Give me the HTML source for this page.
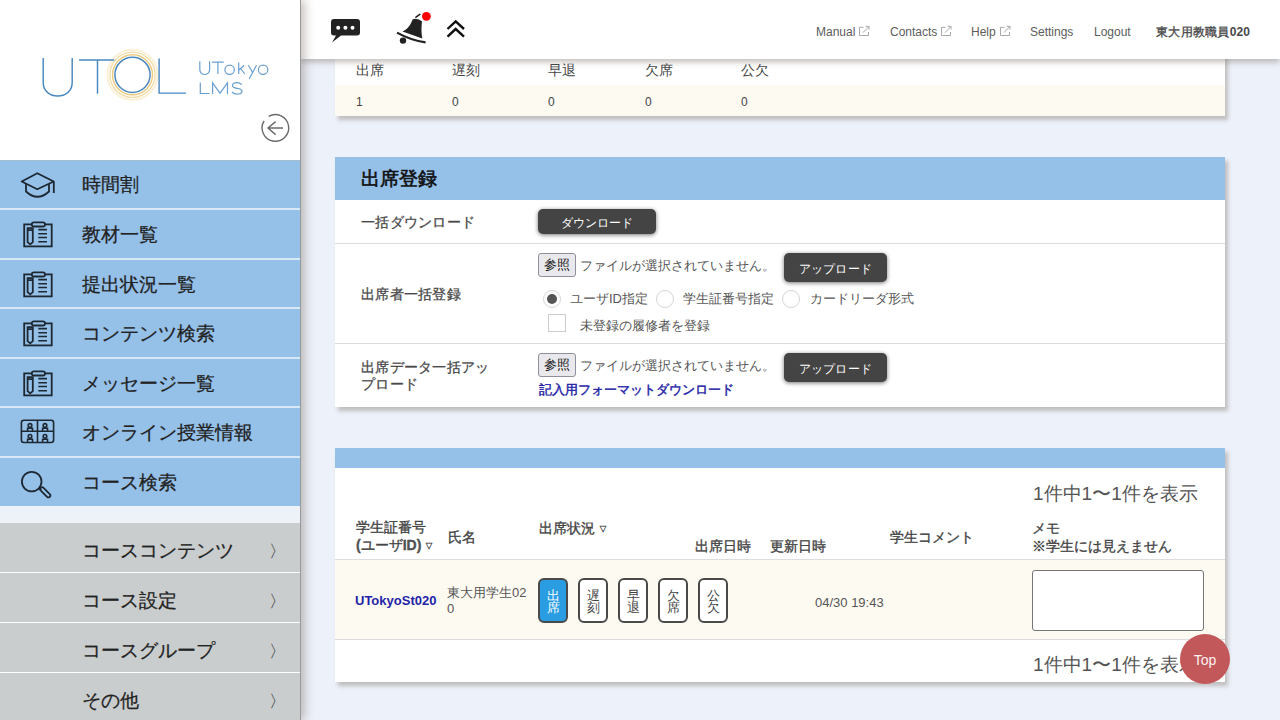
<!DOCTYPE html>
<html lang="ja"><head><meta charset="utf-8">
<style>
*{box-sizing:border-box;margin:0;padding:0}
html,body{width:1280px;height:720px;overflow:hidden}
body{position:relative;background:#edf1f9;font-family:"Liberation Sans",sans-serif;color:#444}
.abs{position:absolute}
#side{position:absolute;left:0;top:0;width:301px;height:720px;background:#fff;z-index:20;border-right:1px solid #999;box-shadow:3px 0 10px rgba(110,100,90,.45)}
.mi{position:absolute;left:0;width:300px;height:48px;background:#95c0e8;color:#222;font-size:19.2px;line-height:48px}
.mi span{position:absolute;left:82px;top:1px;-webkit-text-stroke:0.25px #222}
.mi svg{position:absolute;left:0;top:0}
.gi{position:absolute;left:0;width:300px;height:49px;background:#c9cdcd;color:#222;font-size:19.2px;line-height:49px}
.gi span{position:absolute;left:82px;top:3px;-webkit-text-stroke:0.25px #222}
.gi i{position:absolute;left:269px;top:4px;font-style:normal;font-size:17px;color:#333}
#hdr{position:absolute;left:301px;top:0;width:979px;height:59px;background:#fff;z-index:10;box-shadow:0 3px 6px rgba(110,100,90,.42)}
.card{position:absolute;left:335px;width:890px;background:#fff;box-shadow:3px 4px 4px rgba(110,100,90,.36)}
.lnk{position:absolute;top:24px;font-size:12px;line-height:16px;color:#5c5c5c}

.t{position:absolute;white-space:nowrap}
.hrow{position:absolute;left:0;width:890px;height:1px;background:#dcdcdc}
.dbtn{position:absolute;background:#444;border-radius:5px;color:#fff;font-size:13px;text-align:center;box-shadow:0 1px 4px rgba(0,0,0,.55)}
.fbtn{position:absolute;background:#e9e9ed;border:1px solid #8f8f9d;border-radius:3px;color:#111;font-size:13px;text-align:center}
.radio{position:absolute;width:18px;height:18px;border:1px solid #d6d6d6;border-radius:50%;background:#fff}
.sbtn{position:absolute;width:30px;height:45px;border:2px solid #4a4a4a;border-radius:6px;background:#fff;color:#444;font-size:13px;line-height:12px;padding-top:9.5px;text-align:center}
</style></head><body>
<div id="side">
  <svg class="abs" style="left:0;top:0" width="300" height="160" viewBox="0 0 300 160">
    <!-- logo -->
    <circle cx="132.5" cy="74.8" r="25" fill="none" stroke="#faf0d8" stroke-width="2"/>
    <circle cx="132.5" cy="74.8" r="22.6" fill="none" stroke="#f0dca6" stroke-width="1.3"/>
    <circle cx="132.5" cy="74.8" r="20" fill="none" stroke="#ecca7c" stroke-width="1.4"/>
    <circle cx="132.5" cy="74.8" r="17.6" fill="none" stroke="#4a88c0" stroke-width="1.5"/>
    <g fill="none" stroke="#4a88c0" stroke-width="1.45">
      <path d="M43.2 58 V82.5 C43.2 100.5 72.2 100.5 72.2 82.5 V58"/>
      <path d="M79 59.9 H114.3 M97.5 59.9 V93.8"/>
      <path d="M159.1 58.6 V93.1 H186"/>
    </g>
    
    <g fill="none" stroke="#6a9fcf" stroke-width="1.2" stroke-linecap="butt">
      <path d="M199.8 61.3 V69.6 A4.9 4.9 0 0 0 209.6 69.6 V61.3"/>
      <path d="M212.1 62.2 H223.7 M217.9 62.2 V74"/>
      <ellipse cx="229.6" cy="69.7" rx="4.7" ry="4.6"/>
      <path d="M238.7 62.6 V74 M244.3 65.2 L238.9 70 M240.6 68.5 L244.8 74"/>
      <path d="M248.3 65.2 L252.8 72.8 M256.5 65.2 L249.2 79"/>
      <ellipse cx="263.1" cy="69.7" rx="4.7" ry="4.6"/>
      <path d="M200.3 82.6 V93.5 H209.6"/>
      <path d="M212.6 94 V82.8 L220 93.2 L227.5 82.8 V94"/>
      <path d="M241.8 84.6 Q240 82.6 237 82.6 Q232.5 82.6 232.5 85.6 Q232.5 87.8 237 88.4 Q242 89 242 91.2 Q242 94.1 237 94.1 Q233.8 94.1 232 92"/>
    </g>
    
    <g fill="none" stroke="#6a6a6a" stroke-width="1.4">
      <path d="M268.75 116.38 A13.3 13.3 0 1 1 264.12 120.85"/>
      <path d="M283 128 H268 M275.6 121.6 L268 128 L275.6 134.6"/>
    </g>
  </svg>
  <div class="abs" style="left:0;top:160px;width:300px;height:345.5px;background:#d6e8f7"></div>
  <div class="abs" style="left:0;top:159.5px;width:300px;height:1.5px;background:#a6bccf;z-index:2"></div>
  <div class="mi" style="top:160px;height:48px;line-height:48px"><svg width="60" height="48" viewBox="0 0 60 48" style="position:absolute;left:0;top:0"><g fill="none" stroke="#1e2833" stroke-width="1.8" stroke-linejoin="round"><path d="M37.3 13.2 L53.7 21.5 L37.3 29.2 L21.7 21.5 Z"/><path d="M26 24 V31.5 Q37.5 42 49 31.5 V24"/><path d="M53.8 21.6 V33"/></g></svg><span>時間割</span></div>
  <div class="mi" style="top:210px;height:48px;line-height:48px"><svg width="60" height="48" viewBox="0 0 60 48" style="position:absolute;left:0;top:0"><g fill="none" stroke="#1e2833" stroke-width="1.8"><rect x="24.2" y="14.4" width="27.5" height="22" /><rect x="31.8" y="12.3" width="13.2" height="4.2" rx="2.1" fill="#95c0e8"/><path d="M27.6 18.2 H32.8 V32.2 L30.2 34.4 L27.6 32.2 Z M27.6 20.2 H32.8"/><path d="M38.3 19.6 H47 M38.3 23.8 H47 M38.3 27.5 H47 M38.3 31.7 H47" stroke-width="1.6"/></g></svg><span>教材一覧</span></div>
  <div class="mi" style="top:260px;height:47px;line-height:47px"><svg width="60" height="48" viewBox="0 0 60 48" style="position:absolute;left:0;top:0"><g fill="none" stroke="#1e2833" stroke-width="1.8"><rect x="24.2" y="14.4" width="27.5" height="22" /><rect x="31.8" y="12.3" width="13.2" height="4.2" rx="2.1" fill="#95c0e8"/><path d="M27.6 18.2 H32.8 V32.2 L30.2 34.4 L27.6 32.2 Z M27.6 20.2 H32.8"/><path d="M38.3 19.6 H47 M38.3 23.8 H47 M38.3 27.5 H47 M38.3 31.7 H47" stroke-width="1.6"/></g></svg><span>提出状況一覧</span></div>
  <div class="mi" style="top:309px;height:48px;line-height:48px"><svg width="60" height="48" viewBox="0 0 60 48" style="position:absolute;left:0;top:0"><g fill="none" stroke="#1e2833" stroke-width="1.8"><rect x="24.2" y="14.4" width="27.5" height="22" /><rect x="31.8" y="12.3" width="13.2" height="4.2" rx="2.1" fill="#95c0e8"/><path d="M27.6 18.2 H32.8 V32.2 L30.2 34.4 L27.6 32.2 Z M27.6 20.2 H32.8"/><path d="M38.3 19.6 H47 M38.3 23.8 H47 M38.3 27.5 H47 M38.3 31.7 H47" stroke-width="1.6"/></g></svg><span>コンテンツ検索</span></div>
  <div class="mi" style="top:359px;height:47px;line-height:47px"><svg width="60" height="48" viewBox="0 0 60 48" style="position:absolute;left:0;top:0"><g fill="none" stroke="#1e2833" stroke-width="1.8"><rect x="24.2" y="14.4" width="27.5" height="22" /><rect x="31.8" y="12.3" width="13.2" height="4.2" rx="2.1" fill="#95c0e8"/><path d="M27.6 18.2 H32.8 V32.2 L30.2 34.4 L27.6 32.2 Z M27.6 20.2 H32.8"/><path d="M38.3 19.6 H47 M38.3 23.8 H47 M38.3 27.5 H47 M38.3 31.7 H47" stroke-width="1.6"/></g></svg><span>メッセージ一覧</span></div>
  <div class="mi" style="top:408px;height:48px;line-height:48px"><svg width="60" height="48" viewBox="0 0 60 48" style="position:absolute;left:0;top:0"><g fill="none" stroke="#1e2833" stroke-width="1.6"><rect x="21.4" y="12.3" width="32.2" height="22.2" rx="2.5"/><path d="M37.5 12.3 V34.5 M21.4 23.2 H53.6"/><circle cx="30" cy="17.4" r="1.8"/><circle cx="45" cy="17.4" r="1.8"/><circle cx="30" cy="28.3" r="1.8"/><circle cx="45" cy="28.3" r="1.8"/><path d="M27.6 23 V20.3 H32.5 V23 M42.6 23 V20.3 H47.5 V23 M27.6 34 V31.2 H32.5 V34 M42.6 34 V31.2 H47.5 V34"/></g></svg><span>オンライン授業情報</span></div>
  <div class="mi" style="top:458px;height:47.5px;line-height:47.5px"><svg width="60" height="48" viewBox="0 0 60 48" style="position:absolute;left:0;top:0"><g fill="none" stroke="#1e2833" stroke-width="1.8"><circle cx="31.7" cy="23.6" r="9.8"/><path d="M42.2 31.2 L48.4 37.4" stroke-width="5.6" stroke-linecap="round"/><path d="M42.2 31.2 L48.4 37.4" stroke="#95c0e8" stroke-width="2.1" stroke-linecap="round"/><path d="M39.2 30.6 L41 32.3" /></g></svg><span>コース検索</span></div>
  <div class="abs" style="left:0;top:505.5px;width:300px;height:17.5px;background:#edf1f8"></div>
  <div class="gi" style="top:523px"><span>コースコンテンツ</span><i>〉</i></div>
  <div class="gi" style="top:573px"><span>コース設定</span><i>〉</i></div>
  <div class="gi" style="top:623px"><span>コースグループ</span><i>〉</i></div>
  <div class="gi" style="top:673px"><span>その他</span><i>〉</i></div>
</div>
<div id="hdr">
  <svg class="abs" style="left:0;top:0" width="200" height="59" viewBox="301 0 200 59">
    <g fill="#222">
      <path d="M334 19 H357 Q360 19 360 22 V32.6 Q360 35.6 357 35.6 H341 L332 42.5 L336 35.6 H334 Q331 35.6 331 32.6 V22 Q331 19 334 19 Z"/>
    </g>
    <g fill="#fff"><circle cx="338.2" cy="27.7" r="2"/><circle cx="345.4" cy="27.7" r="2"/><circle cx="352.5" cy="27.7" r="2"/></g>
    <g fill="#222">
      <path d="M412.8 19.2 Q417.5 17.6 422 21.3 C421.3 27 421.2 33 422.3 38.6 L402.5 31.4 C407.5 29.5 410.5 25 412.8 19.2 Z"/>
      <path d="M397 32.6 Q410.5 40.2 425.6 42.4" fill="none" stroke="#222" stroke-width="2.2"/>
      <circle cx="403" cy="40.6" r="3.2"/>
      <path d="M416 17.2 L419.8 14.4" stroke="#222" stroke-width="1.6" stroke-linecap="round"/>
    </g>
    <circle cx="426.4" cy="16.3" r="4.4" fill="#f00"/>
    <g fill="none" stroke="#111" stroke-width="2.4">
      <path d="M447.5 29 L455.7 21.3 L464 29"/>
      <path d="M447.5 36.6 L455.7 29 L464 36.6"/>
    </g>
  </svg>
  <div class="lnk" style="left:515px">Manual<svg width="12" height="12" viewBox="0 0 12 12" style="position:absolute;left:42px;top:1px"><path d="M5.5 2.3 H1.5 V10.5 H10.5 V7" fill="none" stroke="#a8a8a8" stroke-width="1"/><path d="M5 7.6 L10.8 1.6 M7.6 1.4 H11 V4.6" fill="none" stroke="#a8a8a8" stroke-width="1"/></svg></div>
  <div class="lnk" style="left:589px">Contacts<svg width="12" height="12" viewBox="0 0 12 12" style="position:absolute;left:50px;top:1px"><path d="M5.5 2.3 H1.5 V10.5 H10.5 V7" fill="none" stroke="#a8a8a8" stroke-width="1"/><path d="M5 7.6 L10.8 1.6 M7.6 1.4 H11 V4.6" fill="none" stroke="#a8a8a8" stroke-width="1"/></svg></div>
  <div class="lnk" style="left:670px">Help<svg width="12" height="12" viewBox="0 0 12 12" style="position:absolute;left:28px;top:1px"><path d="M5.5 2.3 H1.5 V10.5 H10.5 V7" fill="none" stroke="#a8a8a8" stroke-width="1"/><path d="M5 7.6 L10.8 1.6 M7.6 1.4 H11 V4.6" fill="none" stroke="#a8a8a8" stroke-width="1"/></svg></div>
  <div class="lnk" style="left:729px">Settings</div>
  <div class="lnk" style="left:793px">Logout</div>
  <div class="lnk" style="left:855px;color:#4a4a4a"><span style="-webkit-text-stroke:0.35px #4a4a4a;letter-spacing:0.3px">東大用教職員</span><b>020</b></div>
</div>

<div class="card" style="top:20px;height:96px">
  <div class="t" style="left:21px;top:40.5px;font-size:13.5px;line-height:20px;color:#444">出席</div>
  <div class="t" style="left:117px;top:40.5px;font-size:13.5px;line-height:20px;color:#444">遅刻</div>
  <div class="t" style="left:213px;top:40.5px;font-size:13.5px;line-height:20px;color:#444">早退</div>
  <div class="t" style="left:310px;top:40.5px;font-size:13.5px;line-height:20px;color:#444">欠席</div>
  <div class="t" style="left:406px;top:40.5px;font-size:13.5px;line-height:20px;color:#444">公欠</div>
  <div class="hrow" style="top:64.5px;background:#ddd"></div>
  <div class="abs" style="left:0;top:65px;width:890px;height:31px;background:#fdfaf2"></div>
  <div class="t" style="left:21px;top:74px;font-size:12px;line-height:16px;color:#444">1</div>
  <div class="t" style="left:117px;top:74px;font-size:12px;line-height:16px;color:#444">0</div>
  <div class="t" style="left:213px;top:74px;font-size:12px;line-height:16px;color:#444">0</div>
  <div class="t" style="left:310px;top:74px;font-size:12px;line-height:16px;color:#444">0</div>
  <div class="t" style="left:406px;top:74px;font-size:12px;line-height:16px;color:#444">0</div>
</div>

<div class="card" style="top:157px;height:250px">
  <div class="abs" style="left:0;top:0;width:890px;height:43px;background:#95c0e8"></div>
  <div class="t" style="left:26px;top:10px;font-size:19px;line-height:24px;color:#111;-webkit-text-stroke:0.6px #111">出席登録</div>
  <div class="t" style="left:26px;top:55px;font-size:14px;line-height:20px;color:#4a4a4a;letter-spacing:0.3px;-webkit-text-stroke:0.3px #4a4a4a">一括ダウンロード</div>
  <div class="dbtn" style="left:203px;top:52px;width:118px;height:25px;line-height:25px;font-size:12px"><span style="position:relative;top:2px">ダウンロード</span></div>
  <div class="hrow" style="top:86px"></div>
  <div class="t" style="left:26px;top:127px;font-size:14px;line-height:20px;color:#4a4a4a;letter-spacing:0.3px;-webkit-text-stroke:0.3px #4a4a4a">出席者一括登録</div>
  <div class="fbtn" style="left:203px;top:96px;width:38px;height:24px;line-height:22px">参照</div>
  <div class="t" style="left:245px;top:100px;font-size:13px;line-height:18px;color:#555">ファイルが選択されていません。</div>
  <div class="dbtn" style="left:449px;top:96px;width:103px;height:29px;line-height:29px;font-size:12px;letter-spacing:0.2px"><span style="position:relative;top:2px">アップロード</span></div>
  <div class="radio" style="left:208px;top:133px"><div class="abs" style="left:3px;top:3px;width:10px;height:10px;border-radius:50%;background:#555"></div></div>
  <div class="t" style="left:235px;top:133px;font-size:13px;line-height:18px;color:#555">ユーザID指定</div>
  <div class="radio" style="left:321px;top:133px"></div>
  <div class="t" style="left:348px;top:133px;font-size:13px;line-height:18px;color:#555">学生証番号指定</div>
  <div class="radio" style="left:447px;top:133px"></div>
  <div class="t" style="left:475px;top:133px;font-size:13px;line-height:18px;color:#555">カードリーダ形式</div>
  <div class="abs" style="left:213px;top:157px;width:18px;height:18px;border:1px solid #ccc;background:#fff"></div>
  <div class="t" style="left:245px;top:160px;font-size:13px;line-height:18px;color:#555">未登録の履修者を登録</div>
  <div class="hrow" style="top:186px"></div>
  <div class="t" style="left:26px;top:202px;font-size:14px;line-height:16.5px;color:#4a4a4a;letter-spacing:0.3px;-webkit-text-stroke:0.3px #4a4a4a">出席データ一括アッ<br>プロード</div>
  <div class="fbtn" style="left:203px;top:196px;width:38px;height:24px;line-height:22px">参照</div>
  <div class="t" style="left:245px;top:200px;font-size:13px;line-height:18px;color:#555">ファイルが選択されていません。</div>
  <div class="dbtn" style="left:449px;top:196px;width:103px;height:29px;line-height:29px;font-size:12px;letter-spacing:0.2px"><span style="position:relative;top:2px">アップロード</span></div>
  <div class="t" style="left:204px;top:224px;font-size:13px;line-height:18px;color:#2626a8;-webkit-text-stroke:0.45px #2626a8">記入用フォーマットダウンロード</div>
</div>

<div class="card" style="top:448px;height:234px">
  <div class="abs" style="left:0;top:0;width:890px;height:20px;background:#95c0e8"></div>
  <div class="t" style="left:698px;top:34px;font-size:19px;line-height:24px;color:#555">1件中1〜1件を表示</div>
  <div class="t" style="left:21px;top:70px;font-size:14px;line-height:18px;color:#444;-webkit-text-stroke:0.35px #444">学生証番号<br><b style="color:#555">(</b>ユーザ<b style="color:#555">ID)</b> <span style="font-size:8px;font-weight:normal;position:relative;top:-1px">▽</span></div>
  <div class="t" style="left:113px;top:80px;font-size:14px;line-height:18px;color:#444;-webkit-text-stroke:0.35px #444">氏名</div>
  <div class="t" style="left:204px;top:71px;font-size:14px;line-height:18px;color:#444;-webkit-text-stroke:0.35px #444">出席状況 <span style="font-size:8px;font-weight:normal;position:relative;top:-1px">▽</span></div>
  <div class="t" style="left:360px;top:88.5px;font-size:14px;line-height:18px;color:#444;-webkit-text-stroke:0.35px #444">出席日時</div>
  <div class="t" style="left:435px;top:88.5px;font-size:14px;line-height:18px;color:#444;-webkit-text-stroke:0.35px #444">更新日時</div>
  <div class="t" style="left:555px;top:80px;font-size:14px;line-height:18px;color:#444;-webkit-text-stroke:0.35px #444">学生コメント</div>
  <div class="t" style="left:697px;top:70.5px;font-size:14px;line-height:18px;color:#444;-webkit-text-stroke:0.35px #444">メモ<br>※学生には見えません</div>
  <div class="hrow" style="top:111px;height:2px;background:#ddd"></div>
  <div class="abs" style="left:0;top:112px;width:890px;height:79px;background:#fdfaf2"></div>
  <div class="t" style="left:20px;top:144px;font-size:13px;line-height:18px;color:#2323a8;font-weight:bold">UTokyoSt020</div>
  <div class="t" style="left:112px;top:137px;font-size:13px;line-height:15.5px;color:#555">東大用学生02<br>0</div>
  <div class="sbtn" style="left:203px;top:130px;background:#2a9de2;color:#fff">出<br>席</div>
  <div class="sbtn" style="left:243px;top:130px">遅<br>刻</div>
  <div class="sbtn" style="left:283px;top:130px">早<br>退</div>
  <div class="sbtn" style="left:323px;top:130px">欠<br>席</div>
  <div class="sbtn" style="left:363px;top:130px">公<br>欠</div>
  <div class="t" style="left:480px;top:146px;font-size:13px;line-height:18px;color:#555">04/30 19:43</div>
  <div class="abs" style="left:697px;top:122px;width:172px;height:61px;border:1px solid #767676;border-radius:3px;background:#fff"></div>
  <div class="hrow" style="top:191px"></div>
  <div class="t" style="left:698px;top:205px;font-size:19px;line-height:24px;color:#555">1件中1〜1件を表示</div>
</div>
<div class="abs" style="left:1180px;top:634px;width:50px;height:50px;border-radius:50%;background:#c3585b;color:#fff;font-size:14px;line-height:52px;text-align:center;z-index:30;color:#fdf0f0">Top</div>
</body></html>
